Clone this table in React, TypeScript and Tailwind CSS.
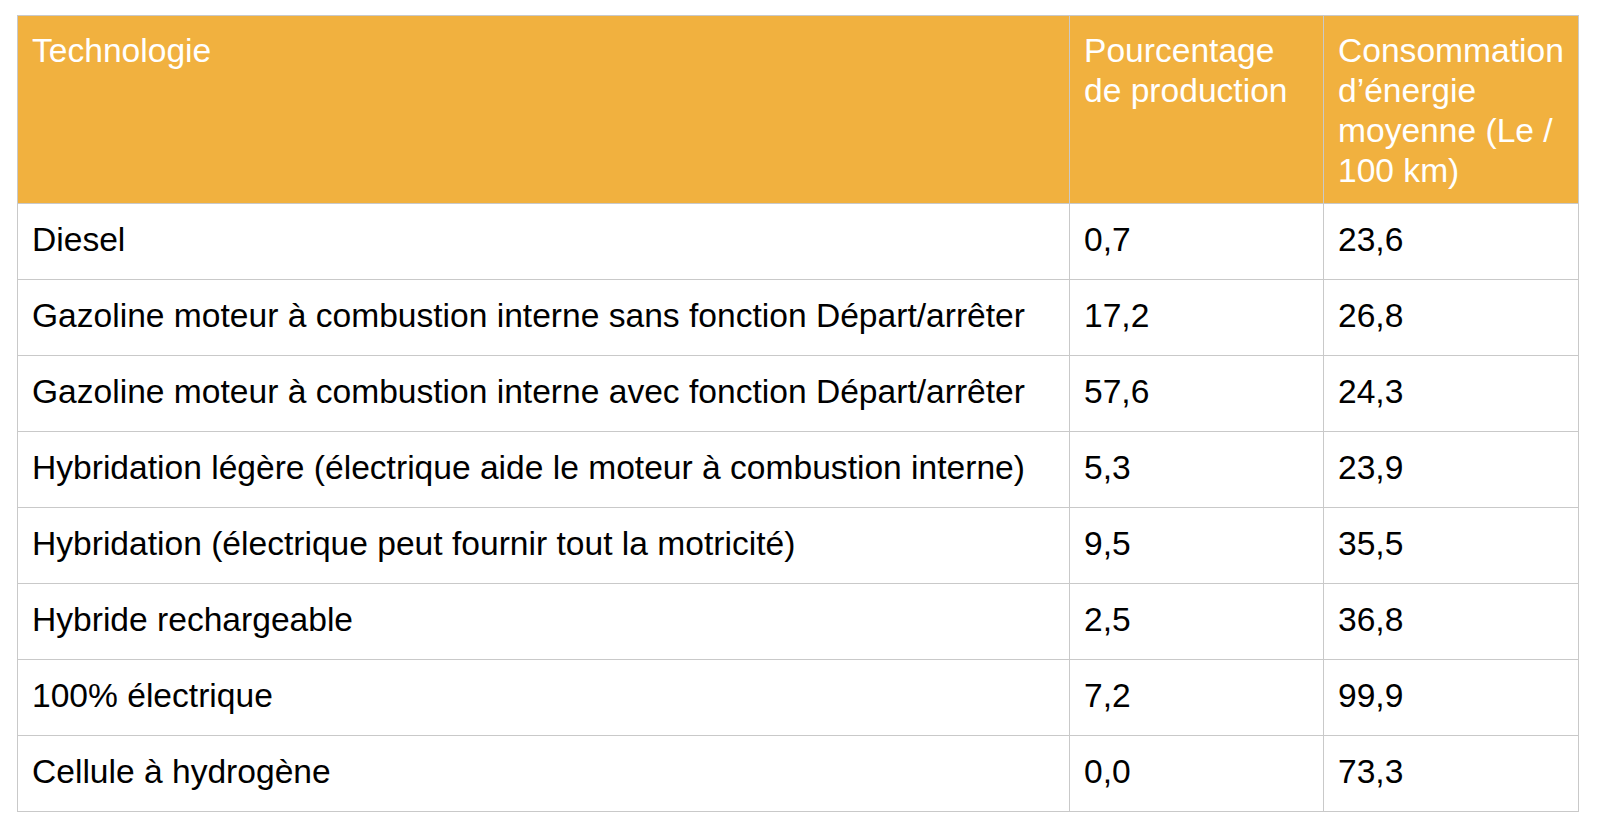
const rows: [string, string, string][] = [
  ["Diesel", "0,7", "23,6"],
  ["Gazoline moteur à combustion interne sans fonction Départ/arrêter", "17,2", "26,8"],
  ["Gazoline moteur à combustion interne avec fonction Départ/arrêter", "57,6", "24,3"],
  ["Hybridation légère (électrique aide le moteur à combustion interne)", "5,3", "23,9"],
  ["Hybridation (électrique peut fournir tout la motricité)", "9,5", "35,5"],
  ["Hybride rechargeable", "2,5", "36,8"],
  ["100% électrique", "7,2", "99,9"],
  ["Cellule à hydrogène", "0,0", "73,3"],
];

export default function App() {
  return (
    <div className="min-h-screen bg-white pl-[17px] pt-[15px] font-['Liberation_Sans',Arial,sans-serif]">
      <table className="w-[1561px] table-fixed border-collapse text-[33.6px] leading-[40px] text-black">
        <colgroup>
          <col className="w-[1052px]" />
          <col className="w-[254px]" />
          <col className="w-[255px]" />
        </colgroup>
        <thead>
          <tr className="h-[188px] bg-[#f1b13f] text-white">
            <th className="border border-[#c9c9c9] pl-[14px] pr-[8px] pt-[15px] align-top text-left font-normal">
              Technologie
            </th>
            <th className="border border-[#c9c9c9] pl-[14px] pr-[8px] pt-[15px] align-top text-left font-normal">
              Pourcentage de production
            </th>
            <th className="border border-[#c9c9c9] pl-[14px] pr-[6px] pt-[15px] align-top text-left font-normal">
              Consommation d’énergie moyenne (Le / 100 km)
            </th>
          </tr>
        </thead>
        <tbody>
          {rows.map(([t, p, c]) => (
            <tr key={t} className="h-[76px]">
              <td className="border border-[#c9c9c9] pl-[14px] pb-[4px]">{t}</td>
              <td className="border border-[#c9c9c9] pl-[14px] pb-[4px]">{p}</td>
              <td className="border border-[#c9c9c9] pl-[14px] pb-[4px]">{c}</td>
            </tr>
          ))}
        </tbody>
      </table>
    </div>
  );
}
